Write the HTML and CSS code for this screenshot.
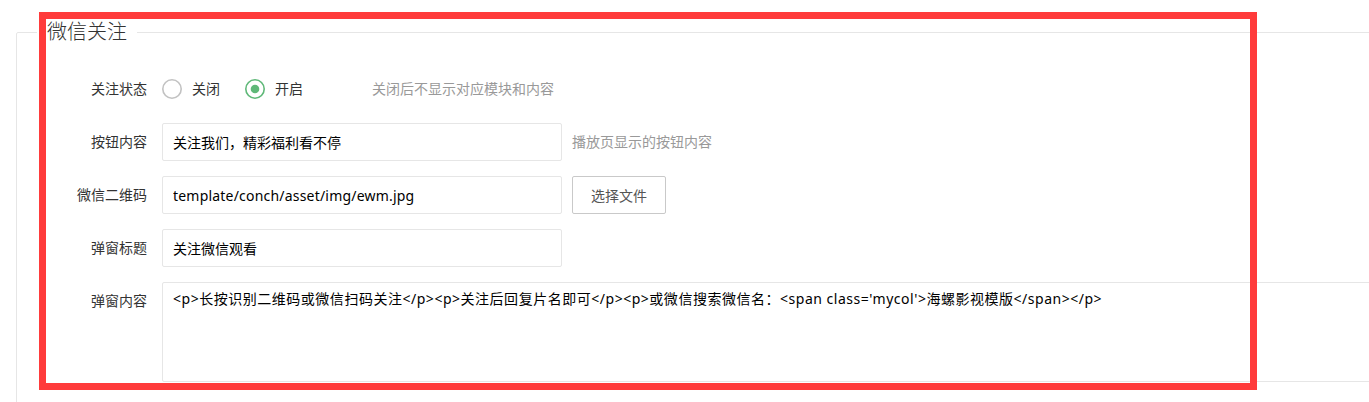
FILE: index.html
```html
<!DOCTYPE html>
<html lang="zh-CN">
<head>
<meta charset="utf-8">
<title>微信关注</title>
<link rel="stylesheet" href="styles.css">
</head>
<body>
<div class="page">
  <fieldset class="field">
    <legend class="field-title">微信关注</legend>
    <div class="field-box">
      <div class="form-item">
        <label class="form-label">关注状态</label>
        <div class="radio-group">
          <span class="radio">
            <svg class="radio-icon" width="20" height="20" viewBox="0 0 20 20"><circle cx="10" cy="10" r="9.2" fill="none" stroke="#c2c2c2" stroke-width="1.6"/></svg>
            <span>关闭</span>
          </span>
          <span class="radio">
            <svg class="radio-icon" width="20" height="20" viewBox="0 0 20 20"><circle cx="10" cy="10" r="9.2" fill="none" stroke="#5fb878" stroke-width="1.6"/><circle cx="10" cy="10" r="4.3" fill="#5fb878"/></svg>
            <span>开启</span>
          </span>
        </div>
        <div class="form-mid">关闭后不显示对应模块和内容</div>
      </div>
      <div class="form-item">
        <label class="form-label">按钮内容</label>
        <div class="input-inline"><input class="input" type="text" value="关注我们，精彩福利看不停"></div>
        <div class="form-mid">播放页显示的按钮内容</div>
      </div>
      <div class="form-item">
        <label class="form-label">微信二维码</label>
        <div class="input-inline"><input class="input input-latin" type="text" value="template/conch/asset/img/ewm.jpg"></div>
        <button class="btn" type="button">选择文件</button>
      </div>
      <div class="form-item">
        <label class="form-label">弹窗标题</label>
        <div class="input-inline"><input class="input" type="text" value="关注微信观看"></div>
      </div>
      <div class="form-item">
        <label class="form-label">弹窗内容</label>
        <div class="input-block"><textarea class="textarea">&lt;p&gt;长按识别二维码或微信扫码关注&lt;/p&gt;&lt;p&gt;关注后回复片名即可&lt;/p&gt;&lt;p&gt;或微信搜索微信名：&lt;span class='mycol'&gt;海螺影视模版&lt;/span&gt;&lt;/p&gt;</textarea></div>
      </div>
    </div>
  </fieldset>
  <div class="highlight"></div>
</div>
</body>
</html>
```

FILE: styles.css
```css
html, body {
  margin: 0;
  padding: 0;
  overflow: hidden;
  background: #fff;
}
body {
  font-family: "Noto Sans", "Noto Sans CJK SC", sans-serif;
  font-size: 14px;
  color: #333;
}
.page {
  position: relative;
  padding: 22px 0 0 16px;
  height: 402px;
  box-sizing: border-box;
  overflow: hidden;
}
.field {
  width: 1400px;
  box-sizing: border-box;
  margin: 0;
  padding: 0;
  border: 1px solid #e6e6e6;
  border-radius: 2px;
  height: 420px;
}
.field-title {
  margin-left: 20px;
  padding: 0 10px;
  font-size: 20px;
  font-weight: 300;
  line-height: 20px;
  color: #333;
}
.field-box {
  padding: 28px 20px 0 15px;
}
.form-item {
  display: flex;
  align-items: flex-start;
  margin-bottom: 15px;
}
.form-label {
  width: 130px;
  box-sizing: border-box;
  padding: 9px 15px 9px 0;
  line-height: 20px;
  text-align: right;
  color: #333;
  flex: none;
}
.radio-group {
  width: 200px;
  height: 38px;
  display: flex;
  align-items: center;
  margin-right: 10px;
  flex: none;
}
.radio {
  display: flex;
  align-items: center;
  margin-right: 25px;
  line-height: 20px;
}
.radio-icon {
  margin-right: 10px;
  display: block;
}
.form-mid {
  padding: 9px 0;
  line-height: 20px;
  color: #999;
}
.input-inline {
  width: 400px;
  margin-right: 10px;
  flex: none;
}
.input {
  display: block;
  width: 100%;
  height: 38px;
  box-sizing: border-box;
  border: 1px solid #e6e6e6;
  border-radius: 2px;
  padding: 0 10px;
  font-family: "Noto Sans CJK SC", sans-serif;
  font-size: 14px;
  color: #000;
  background: #fff;
  outline: none;
}
.input-latin {
  font-family: "Noto Sans", "Noto Sans CJK SC", sans-serif;
  letter-spacing: 0.2px;
}
.btn {
  height: 38px;
  box-sizing: border-box;
  padding: 0 18px;
  border: 1px solid #c9c9c9;
  border-radius: 2px;
  background: #fff;
  color: #555;
  font-family: "Noto Sans CJK SC", sans-serif;
  font-size: 14px;
  line-height: 36px;
}
.input-block {
  flex: 1;
}
.textarea {
  display: block;
  width: 100%;
  height: 100px;
  box-sizing: border-box;
  border: 1px solid #e6e6e6;
  border-radius: 2px;
  padding: 6px 10px;
  line-height: 20px;
  font-family: "Noto Sans", "Noto Sans CJK SC", sans-serif;
  font-size: 14px;
  letter-spacing: 0.52px;
  color: #000;
  resize: none;
  outline: none;
}
.highlight {
  position: absolute;
  left: 39px;
  top: 12px;
  width: 1218px;
  height: 378px;
  box-sizing: border-box;
  border: 7px solid #ff3b3b;
  pointer-events: none;
}
```
